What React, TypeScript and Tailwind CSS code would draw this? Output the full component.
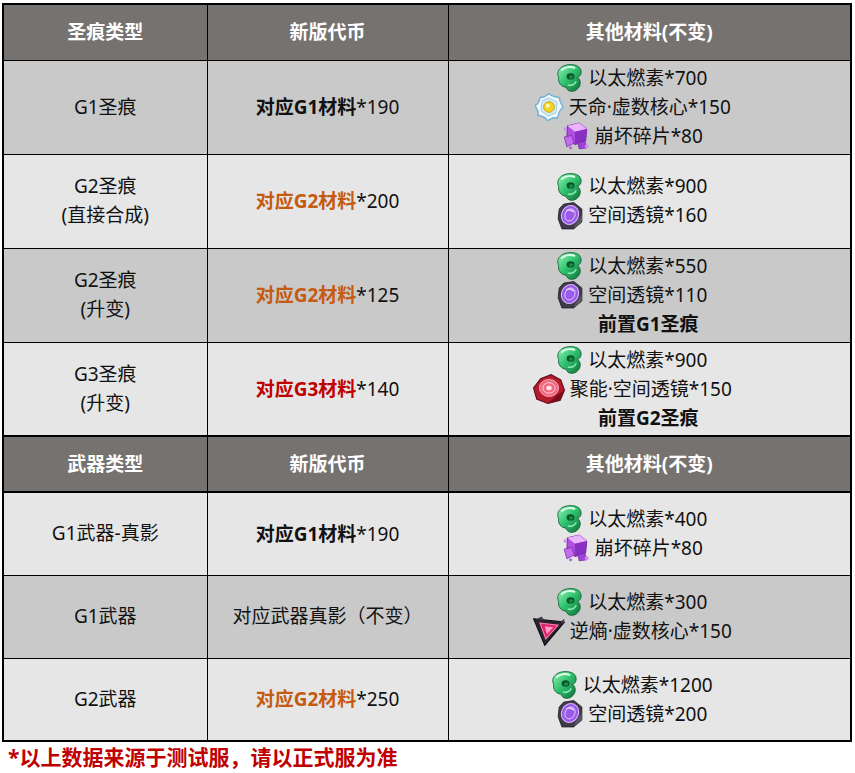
import React from 'react';

type IconKind = 'ether' | 'core' | 'shard' | 'lens' | 'redLens' | 'antiCore';

function MatIcon({ kind }: { kind: IconKind }) {
  if (kind === 'ether') {
    return (
      <svg width="26" height="28" viewBox="0 0 24 26" className="shrink-0">
        <defs>
          <linearGradient id="eg" x1="0" y1="0" x2="1" y2="1">
            <stop offset="0" stopColor="#9af5bb" />
            <stop offset="0.45" stopColor="#33c472" />
            <stop offset="1" stopColor="#0f6e37" />
          </linearGradient>
        </defs>
        <path d="M3 4 C6 0 16 -0.5 20 2.5 C23.5 5.5 23 11 19 12.5 C22.5 14.5 22.5 21 18 24 C14.5 26.5 9 25.5 8.5 21.5 C4 21.5 0.5 17 1.5 12.5 C0 9.5 0.5 6 3 4 Z" fill="url(#eg)" stroke="#0c5f2f" strokeWidth="0.8" />
        <ellipse cx="12.5" cy="11.5" rx="3.6" ry="3" fill="#0b5228" />
        <ellipse cx="13" cy="12" rx="2" ry="1.6" fill="#1e8a47" />
        <path d="M4.5 5.5 C8 2.5 13 2.3 16 3.5" stroke="#e0ffea" strokeWidth="1.8" fill="none" strokeLinecap="round" />
        <path d="M10.5 19.5 C13 20.5 16.5 19 17.5 16.5" stroke="#86eab0" strokeWidth="1.5" fill="none" strokeLinecap="round" />
      </svg>
    );
  }
  if (kind === 'core') {
    return (
      <svg width="30" height="28" viewBox="0 0 28 26" className="shrink-0">
        <path d="M14 0.5 C17 4.5 20.5 2.5 24 4.5 C23 8.5 27.5 11 27 14 C23 15 23.5 20 21.5 23.5 C17.5 21.5 15 25.5 12 25.5 C11 21.5 6 21.5 3.5 20.5 C5.5 16 0.5 14 1.5 11 C5.5 10 4.5 5.5 6.5 3.5 C10 5.5 12 1.5 14 0.5 Z" fill="#eef8fd" stroke="#6fb0d3" strokeWidth="1.3" />
        <path d="M14 4.5 L21.5 8.5 L20.5 18.5 L13 21.5 L6.5 16.5 L7.5 7.5 Z" fill="#d3e9f5" stroke="#9cc6de" strokeWidth="0.8" />
        <circle cx="14" cy="13" r="5" fill="#f5d328" stroke="#c9a10e" strokeWidth="0.8" />
        <circle cx="12.8" cy="11.8" r="1.8" fill="#fff7b0" />
      </svg>
    );
  }
  if (kind === 'shard') {
    return (
      <svg width="28" height="28" viewBox="0 0 26 26" className="shrink-0">
        <path d="M5 3.5 L16 1 L23 6.5 L22 17.5 L12 21 L4.5 15.5 Z" fill="#b04fe0" stroke="#6b1f9a" strokeWidth="0.8" />
        <path d="M5 3.5 L16 1 L23 6.5 L12 9 Z" fill="#eab4ff" />
        <path d="M12 9 L23 6.5 L22 17.5 L12 21 Z" fill="#8a2fc4" />
        <path d="M2 14 L9 12.5 L11.5 19.5 L4.5 23 Z" fill="#c46cf0" stroke="#6b1f9a" strokeWidth="0.6" />
        <path d="M14.5 19 L21.5 18 L23 24 L16 25 Z" fill="#9d44d6" stroke="#6b1f9a" strokeWidth="0.6" />
        <circle cx="23" cy="22.5" r="1.8" fill="#d58cf7" />
        <circle cx="3" cy="6.5" r="1.6" fill="#d58cf7" />
        <circle cx="8" cy="24" r="1.4" fill="#b35ee6" />
      </svg>
    );
  }
  if (kind === 'lens') {
    return (
      <svg width="26" height="28" viewBox="0 0 24 26" className="shrink-0">
        <path d="M6 2 L15.5 0.5 L23 6.5 L23 18.5 L15.5 25 L4.5 25 L1 15.5 L2 6.5 Z" fill="#3e3a48" stroke="#25222c" strokeWidth="0.8" />
        <path d="M15.5 25 L23 18.5 L23 12 L17 20.5 Z" fill="#5b5566" />
        <ellipse cx="12" cy="12" rx="7.8" ry="9" transform="rotate(25 12 12)" fill="#9b5bea" stroke="#d8b6ff" strokeWidth="1" />
        <ellipse cx="12" cy="12" rx="4.5" ry="5.8" transform="rotate(25 12 12)" fill="none" stroke="#e2c9ff" strokeWidth="0.8" />
        <path d="M8.5 8.5 C11 6.5 14 7.5 15.5 9.5" stroke="#f2e6ff" strokeWidth="1.1" fill="none" />
      </svg>
    );
  }
  if (kind === 'redLens') {
    return (
      <svg width="32" height="30" viewBox="0 0 30 28" className="shrink-0">
        <path d="M7 4.5 L17 0.5 L26 5.5 L29.5 15 L25.5 24.5 L14 27.5 L3.5 23.5 L0.5 13 Z" fill="#b31c2e" stroke="#5a0a14" strokeWidth="1" />
        <path d="M14 27.5 L25.5 24.5 L29.5 15 L22 20 Z" fill="#7a0f1c" />
        <ellipse cx="15" cy="13" rx="9" ry="8" fill="#ef6a80" stroke="#ffb3c0" strokeWidth="0.8" />
        <ellipse cx="15" cy="13" rx="5.8" ry="4.9" fill="none" stroke="#ffd0d8" strokeWidth="0.9" />
        <ellipse cx="15" cy="13" rx="2.6" ry="2.1" fill="#ffe2e7" />
      </svg>
    );
  }
  return (
    <svg width="32" height="30" viewBox="0 0 30 28" className="shrink-0">
      <path d="M0.5 2.5 L29.5 5.5 L11 27.5 Z" fill="#2b2230" stroke="#120c16" strokeWidth="1" />
      <path d="M3 3 L8 0.5 L11 4 Z" fill="#4a3a52" />
      <path d="M26 5 L29.5 2.5 L28.5 8 Z" fill="#4a3a52" />
      <path d="M6.5 6.5 L23.5 8.5 L12 21.5 Z" fill="#e0246a" stroke="#ff7fb0" strokeWidth="1" />
      <path d="M11 9.5 L19 10.5 L13 17 Z" fill="#ff9cc4" />
    </svg>
  );
}

type Mat = { icon?: IconKind; text: string; bold?: boolean };

function MatLine({ m }: { m: Mat }) {
  if (!m.icon) {
    return <div className="h-[29px] flex items-center justify-center font-bold pl-[32px]">{m.text}</div>;
  }
  return (
    <div className="h-[29px] flex items-center justify-center gap-[5px]">
      <MatIcon kind={m.icon} />
      <span>{m.text}</span>
    </div>
  );
}

type Row = {
  type: string[];
  prefix: string;
  color?: 'black' | 'orange' | 'red' | 'none';
  suffix: string;
  mats: Mat[];
  dark: boolean;
  h: string;
};

const stigmata: Row[] = [
  {
    type: ['G1圣痕'],
    prefix: '对应G1材料',
    color: 'black',
    suffix: '*190',
    dark: true,
    h: 'h-[94px]',
    mats: [
      { icon: 'ether', text: '以太燃素*700' },
      { icon: 'core', text: '天命·虚数核心*150' },
      { icon: 'shard', text: '崩坏碎片*80' },
    ],
  },
  {
    type: ['G2圣痕', '(直接合成)'],
    prefix: '对应G2材料',
    color: 'orange',
    suffix: '*200',
    dark: false,
    h: 'h-[94px]',
    mats: [
      { icon: 'ether', text: '以太燃素*900' },
      { icon: 'lens', text: '空间透镜*160' },
    ],
  },
  {
    type: ['G2圣痕', '(升变)'],
    prefix: '对应G2材料',
    color: 'orange',
    suffix: '*125',
    dark: true,
    h: 'h-[94px]',
    mats: [
      { icon: 'ether', text: '以太燃素*550' },
      { icon: 'lens', text: '空间透镜*110' },
      { text: '前置G1圣痕', bold: true },
    ],
  },
  {
    type: ['G3圣痕', '(升变)'],
    prefix: '对应G3材料',
    color: 'red',
    suffix: '*140',
    dark: false,
    h: 'h-[94px]',
    mats: [
      { icon: 'ether', text: '以太燃素*900' },
      { icon: 'redLens', text: '聚能·空间透镜*150' },
      { text: '前置G2圣痕', bold: true },
    ],
  },
];

const weapons: Row[] = [
  {
    type: ['G1武器-真影'],
    prefix: '对应G1材料',
    color: 'black',
    suffix: '*190',
    dark: false,
    h: 'h-[83px]',
    mats: [
      { icon: 'ether', text: '以太燃素*400' },
      { icon: 'shard', text: '崩坏碎片*80' },
    ],
  },
  {
    type: ['G1武器'],
    prefix: '对应武器真影（不变）',
    color: 'none',
    suffix: '',
    dark: true,
    h: 'h-[83px]',
    mats: [
      { icon: 'ether', text: '以太燃素*300' },
      { icon: 'antiCore', text: '逆熵·虚数核心*150' },
    ],
  },
  {
    type: ['G2武器'],
    prefix: '对应G2材料',
    color: 'orange',
    suffix: '*250',
    dark: false,
    h: 'h-[83px]',
    mats: [
      { icon: 'ether', text: '以太燃素*1200' },
      { icon: 'lens', text: '空间透镜*200' },
    ],
  },
];

function HeaderRow({ first, second }: { first: string; second?: boolean }) {
  const tb = second ? 'border-t-2 border-b-2' : 'border-t-2';
  return (
    <tr className="bg-[#767270] text-white font-bold h-[56px]">
      <th className={`border border-black border-l-2 ${tb}`}>{first}</th>
      <th className={`border border-black ${tb}`}>新版代币</th>
      <th className={`border border-black border-r-2 ${tb}`}>其他材料(不变)</th>
    </tr>
  );
}

function DataRow({ r, last }: { r: Row; last?: boolean }) {
  const bg = r.dark ? 'bg-[#c9c9c9]' : 'bg-[#e6e6e6]';
  const colorCls =
    r.color === 'orange'
      ? 'text-[#c55a11] font-bold'
      : r.color === 'red'
      ? 'text-[#c00000] font-bold'
      : r.color === 'black'
      ? 'font-bold'
      : '';
  const bottom = last ? 'border-b-2' : '';
  return (
    <tr className={`${bg} ${r.h}`}>
      <td className={`border border-black border-l-2 ${bottom} text-center leading-[29px]`}>
        {r.type.map((t) => (
          <div key={t}>{t}</div>
        ))}
      </td>
      <td className={`border border-black ${bottom} text-center`}>
        <span className={colorCls}>{r.prefix}</span>
        {r.suffix}
      </td>
      <td className={`border border-black border-r-2 ${bottom}`}>
        <div className="flex flex-col pr-[34px]">
          {r.mats.map((m) => (
            <MatLine key={m.text} m={m} />
          ))}
        </div>
      </td>
    </tr>
  );
}

export default function App() {
  return (
    <div
      className="w-[855px] h-[773px] bg-white text-[19px] text-[#111] pt-[3px] pl-[2px]"
      style={{ fontFamily: '"Noto Sans", "Noto Sans CJK SC", sans-serif' }}
    >
      <table className="w-[848px] table-fixed border-collapse">
        <colgroup>
          <col className="w-[204px]" />
          <col className="w-[241px]" />
          <col className="w-[403px]" />
        </colgroup>
        <tbody>
          <HeaderRow first="圣痕类型" />
          {stigmata.map((r, i) => (
            <DataRow key={i} r={r} />
          ))}
          <HeaderRow first="武器类型" second />
          {weapons.map((r, i) => (
            <DataRow key={i} r={r} last={i === weapons.length - 1} />
          ))}
        </tbody>
      </table>
      <div className="pl-[6px] pt-[1px] text-[21px] font-bold text-[#c00000] leading-[28px]">
        *以上数据来源于测试服，请以正式服为准
      </div>
    </div>
  );
}
